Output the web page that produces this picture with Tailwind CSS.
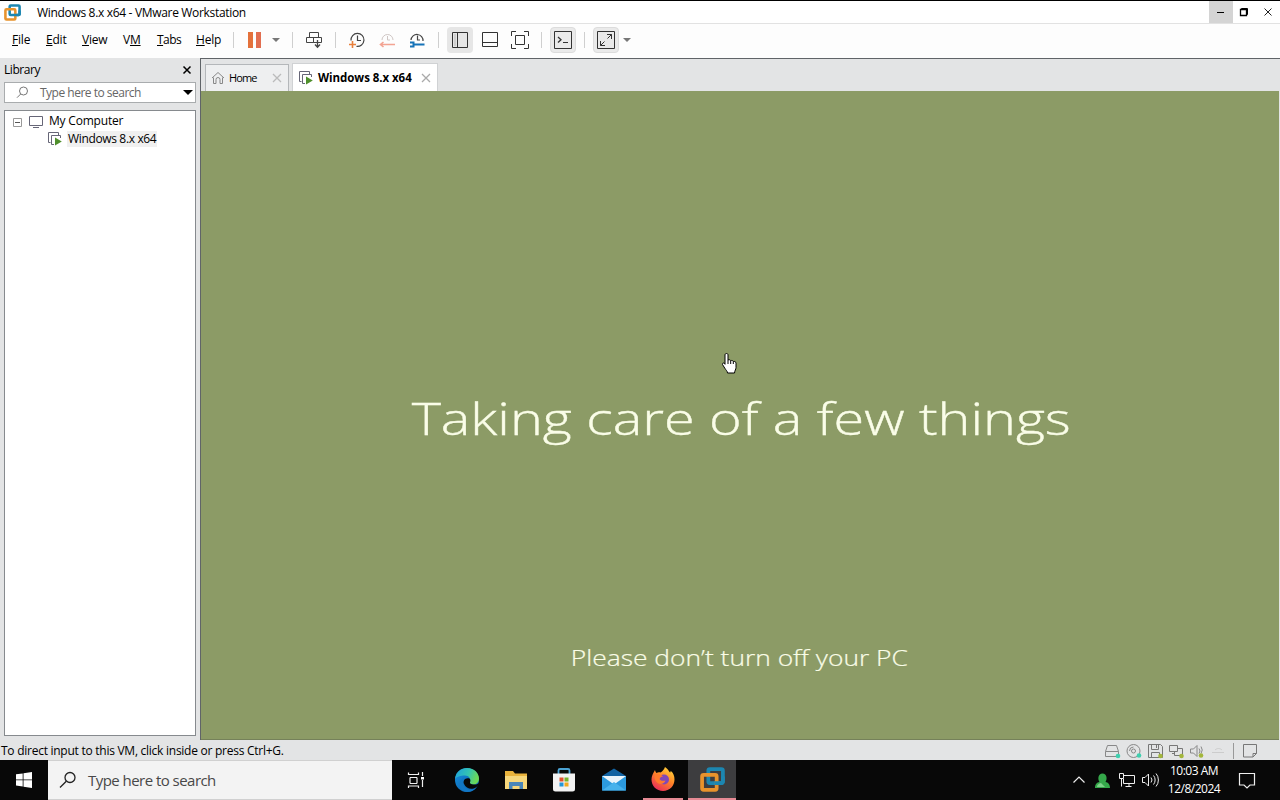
<!DOCTYPE html>
<html lang="en">
<head>
  <meta charset="UTF-8">
  <meta name="viewport" content="width=device-width, initial-scale=1.0">
  <title>Windows 8.x x64 - VMware Workstation</title>
  <script src="https://cdn.jsdelivr.net/npm/@tailwindcss/browser@4"></script>
</head>
<body class="font-['Open_Sans','Noto_Sans',sans-serif] text-black">
<!-- shared symbols -->
<svg class="hidden">
  <symbol id="vmware" viewBox="0 0 24 24">
    <g fill="none" stroke-width="3.6" stroke-linejoin="round">
      <rect x="8" y="2" width="14" height="13.500" rx="1.500" stroke="#1c86b0"/>
      <rect x="2" y="7.500" width="14" height="14.500" rx="1.500" stroke="#e8932c"/>
      <path d="M14 15.500h6.500a1.500 1.500 0 0 0 1.500-1.500V9" stroke="#1c86b0"/>
    </g>
  </symbol>
  <symbol id="vm-on" viewBox="0 0 14 14">
    <path d="M10.500 3.500v-3h-10v10h2" fill="none" stroke="#667"/>
    <path d="M6 12.500H3.500v-9h9V6" fill="none" stroke="#667"/>
    <path d="M7 5.500v8l6.800-4z" fill="#4f8f2c"/>
  </symbol>
</svg>

<div class="flex flex-col w-[1280px] h-[800px] overflow-hidden bg-[#e3e4e5]">

  <!-- title bar -->
  <div class="flex items-center h-6 shrink-0 border-t border-black border-b border-b-[#e2e2e2] bg-white">
    <svg class="w-[17px] h-[17px] ml-1"><use href="#vmware"/></svg>
    <span class="ml-4 pt-px text-[12px] leading-none tracking-[-0.32px]">Windows 8.x x64 - VMware Workstation</span>
    <div class="flex h-full ml-auto">
      <div class="flex items-center justify-center w-[24px] h-full bg-[#d4d4d4]">
        <svg width="10" height="10"><path d="M1 5.500h7" stroke="#000"/></svg>
      </div>
      <div class="flex items-center justify-center w-[23px] pr-px">
        <svg width="10" height="10" fill="none" stroke="#000"><path d="M2.500 2.500v-1h6v6h-1"/><path d="M1.500 2.500h6v6h-6z" stroke-width="1.300"/></svg>
      </div>
      <div class="flex items-center justify-center w-[24px] pr-px">
        <svg width="10" height="10"><path d="M1.500 1.500l7 7M8.500 1.500l-7 7" stroke="#222"/></svg>
      </div>
    </div>
  </div>

  <!-- menu and toolbar -->
  <div class="flex items-center h-[34px] shrink-0 pl-3 pb-[2px] bg-[#fdfdfd] text-[12px] leading-none">
    <div class="flex tracking-[-0.2px]">
      <span class="w-[34px]"><u>F</u>ile</span>
      <span class="w-[36px]"><u>E</u>dit</span>
      <span class="w-[41px]"><u>V</u>iew</span>
      <span class="w-[34px]">V<u>M</u></span>
      <span class="w-[39px] tracking-[-0.5px]"><u>T</u>abs</span>
      <span class="w-[37px]"><u>H</u>elp</span>
    </div>
    <div class="w-px h-4 bg-[#cfcfcf]"></div>
    <div class="flex gap-[3px] ml-[14px]">
      <div class="w-[5px] h-4 bg-[#e4713b]"></div>
      <div class="w-[5px] h-4 bg-[#e26e50]"></div>
    </div>
    <svg class="ml-[11px]" width="8" height="4"><path d="M0 0h8L4 4z" fill="#777"/></svg>
    <div class="w-px h-4 ml-[12px] bg-[#cfcfcf]"></div>
    <!-- send ctrl+alt+del -->
    <svg class="ml-[12px]" width="18" height="18" fill="none" stroke="#444">
      <path d="M4.500 1.500h9v5h-9zM1.500 6.500h7v5h-7zM8.500 6.500h8v5h-8z"/>
      <path d="M12.500 9v7M10 13.500l2.500 2.700 2.500-2.700" stroke-width="1.300"/>
    </svg>
    <div class="w-px h-4 ml-[12px] bg-[#cfcfcf]"></div>
    <!-- snapshots -->
    <svg class="ml-[12px]" width="18" height="18" fill="none">
      <path d="M3 9.500A6.500 6.500 0 1 1 8.500 15.300" stroke="#444" stroke-width="1.200"/>
      <path d="M9.500 4.500v5H13" stroke="#444" stroke-width="1.200"/>
      <path d="M4.500 10v7M1 13.500h7" stroke="#e8803c" stroke-width="1.600"/>
    </svg>
    <svg class="ml-[12px]" width="18" height="18" fill="none">
      <path d="M4 9a5.500 5.500 0 1 1 11 0" stroke="#cfc6c4"/>
      <path d="M9.500 5v4H12" stroke="#cfc6c4"/>
      <path d="M2.500 13.500H17M5.500 11l-3 2.500 3 2.500" stroke="#f3a493" stroke-width="1.600"/>
    </svg>
    <svg class="ml-[12px]" width="18" height="18" fill="none">
      <path d="M3 9a6 6 0 1 1 12 1" stroke="#444" stroke-width="1.200"/>
      <path d="M9.500 4.500v4.500H12" stroke="#444" stroke-width="1.200"/>
      <path d="M2 11.500h3.500v4H2M6 13.500h10.500" stroke="#1673b8" stroke-width="2"/>
    </svg>
    <div class="w-px h-4 ml-[12px] bg-[#cfcfcf]"></div>
    <!-- view buttons -->
    <div class="flex items-center justify-center w-[26px] h-[26px] ml-[8px] rounded bg-[#e6e6e6]">
      <svg width="18" height="18" fill="none" stroke="#333"><path d="M1.500 1.500h15v15h-15zM6.500 1.500v15"/><path d="M4 3v12" stroke="#bbb"/></svg>
    </div>
    <svg class="ml-[8px]" width="18" height="18" fill="none" stroke="#333"><path d="M1.500 1.500h15v14h-15zM1.500 11.500h15"/></svg>
    <svg class="ml-[11px]" width="20" height="20" fill="none" stroke="#333"><path d="M1.500 6v-4.500H6M14 1.500h4.500V6M18.500 14v4.500H14M6 18.500H1.500V14M5.500 5.500h9v9h-9z"/></svg>
    <div class="w-px h-4 ml-[11px] bg-[#cfcfcf]"></div>
    <div class="flex items-center justify-center w-[26px] h-[26px] ml-[8px] rounded border border-[#dcdcdc] bg-[#eaeaea]">
      <svg width="18" height="18" fill="none" stroke="#333"><path d="M.5.500h17v17H.5zM9 11.500h5"/><path d="M4 6l3 2.800L4 11.500" stroke-width="1.300"/></svg>
    </div>
    <div class="w-px h-4 ml-[8px] bg-[#cfcfcf]"></div>
    <div class="flex items-center justify-center w-[26px] h-[26px] ml-[8px] rounded border border-[#dcdcdc] bg-[#eaeaea]">
      <svg width="18" height="18" fill="none" stroke="#333"><path d="M.5.500h17v17H.5z"/><path d="M10 3.500h4.500V8M3.500 10v4.500H8M14.500 3.500l-4 4M3.500 14.500l4-4"/></svg>
    </div>
    <svg class="ml-[4px]" width="8" height="4"><path d="M0 0h8L4 4z" fill="#777"/></svg>
  </div>

  <!-- library and vm -->
  <div class="flex h-[682px] shrink-0">
    <div class="flex flex-col w-[200px] px-1 pb-1 text-[12px] leading-none">
      <div class="flex items-center justify-between h-6 pr-1">
        <span class="tracking-[-0.45px]">Library</span>
        <svg width="10" height="10"><path d="M1.500 1.500l7 7M8.500 1.500l-7 7" stroke="#000" stroke-width="1.500"/></svg>
      </div>
      <div class="flex items-center h-[21px] px-[2px] border border-[#a9acae] bg-white text-[#666]">
        <svg class="ml-[9px]" width="13" height="13" fill="none" stroke="#777"><circle cx="7.500" cy="5" r="4"/><path d="M4.700 8L1 11.700"/></svg>
        <span class="ml-[11px] pt-px tracking-[-0.5px]">Type here to search</span>
        <svg class="ml-auto" width="10" height="5"><path d="M0 0h10L5 5z" fill="#000"/></svg>
      </div>
      <div class="flex-1 mt-[7px] pt-[1px] border border-[#868a8e] bg-white">
        <div class="flex items-center h-[18px] pl-2">
          <svg width="9" height="9" fill="none" stroke="#999" class="mt-[3px]"><path d="M.5.500h8v8h-8z"/><path d="M2 4.500h5" stroke="#555"/></svg>
          <svg class="ml-[7px]" width="14" height="13" fill="none" stroke="#667"><path d="M.5 1.500h13v9H.5zM4 12.500h6"/></svg>
          <span class="ml-[6px] tracking-[-0.2px]">My Computer</span>
        </div>
        <div class="flex items-center h-[18px] pl-[43px]">
          <svg class="w-[14px] h-[14px]"><use href="#vm-on"/></svg>
          <span class="flex items-center h-4 ml-[5px] px-px bg-[#f0f0f0] tracking-[-0.35px]">Windows 8.x x64</span>
        </div>
      </div>
    </div>

    <div class="flex flex-col w-[1080px] border-t border-l border-[#606468]">
      <div class="flex items-end h-8 pl-1 text-[12px] leading-none">
        <div class="flex items-center w-[84px] h-[27px] pl-[5px] border border-b-0 border-[#b4b7ba] bg-[#eeeff0]">
          <svg width="14" height="14" fill="none" stroke="#888"><path d="M1 7l6-5.500L13 7M2.500 6.500v6H5v-4a2 2 0 0 1 4 0v4h2.500v-6"/></svg>
          <span class="ml-1 pb-px text-[11px] tracking-[-0.9px]">Home</span>
          <svg class="ml-auto mr-[6px]" width="10" height="10"><path d="M1 1l8 8M9 1L1 9" stroke="#bbb" stroke-width="1.300"/></svg>
        </div>
        <div class="flex items-center w-[146px] h-7 ml-[3px] pl-[6px] border border-b-0 border-[#d0d2d4] bg-white">
          <svg class="w-[14px] h-[14px]"><use href="#vm-on"/></svg>
          <span class="ml-[5px] text-[11.500px] font-bold tracking-[-0.05px] whitespace-nowrap">Windows 8.x x64</span>
          <svg class="ml-auto mr-[6px]" width="10" height="10"><path d="M1 1l8 8M9 1L1 9" stroke="#aaa" stroke-width="1.300"/></svg>
        </div>
      </div>

      <!-- guest screen -->
      <div class="relative flex-1 flex flex-col items-center mr-px border-b border-[#75815a] bg-[#8c9b66] text-[#fafde8] font-light leading-none whitespace-nowrap">
        <div class="mt-[304px] ml-[3px] h-[52px] text-[45px] origin-center scale-x-[1.238] [-webkit-text-stroke:0.4px_#fafde8]">Taking care of a few things</div>
        <div class="mt-[200px] mr-px h-[26px] text-[21.500px] origin-center scale-x-[1.227] [-webkit-text-stroke:0.2px_#fafde8]">Please don’t turn off your PC</div>
        <svg class="absolute left-[519px] top-[261px]" width="18" height="24" viewBox="0 0 18 24">
          <path d="M5.500 1.500c1 0 1.500.6 1.500 1.500v5c1-.6 2.300-.3 2.700.7 1-.5 2.200-.2 2.600.8 1.200-.4 2.700.2 2.700 1.700v4.300c0 2-1.300 3-1.500 5.500H6.500c0-1.800-1.700-3-2.700-4.800L1.500 12.500c-.4-1.200 1-2 1.900-1.100L4 12.300V3c0-.9.500-1.500 1.500-1.500z" fill="#fff" stroke="#000" transform="translate(1 0)"/>
          <path d="M8 8v4M10.700 9v3M13.300 9.700V12" stroke="#000" fill="none"/>
        </svg>
      </div>
    </div>
  </div>

  <!-- status bar -->
  <div class="flex items-center h-5 shrink-0 pl-px text-[12px] leading-none">
    <span class="pt-px tracking-[-0.26px]">To direct input to this VM, click inside or press Ctrl+G.</span>
    <div class="flex items-center ml-auto pt-[2px] pb-px mr-[22px]">
      <svg width="17" height="16" fill="none" stroke="#888"><path d="M1.500 8.500l2-6h9l2 6v5h-13zM1.500 8.500h13"/><circle cx="14" cy="13" r="2.300" fill="#3fcfae" stroke="none"/></svg>
      <svg class="ml-[5px]" width="17" height="16" fill="none" stroke="#888"><circle cx="7.500" cy="8" r="6.500"/><circle cx="7.500" cy="8" r="2"/><path d="M7.500 4a4 4 0 0 0-4 4"/><circle cx="13" cy="12.500" r="2.300" fill="#3fcfae" stroke="none"/></svg>
      <svg class="ml-[4px]" width="17" height="16" fill="none" stroke="#777"><path d="M1.500 1.500h12l2 2v11h-14zM4.500 1.500v5h7v-5M9.500 2v3M4.500 14.500v-5h8v5"/><circle cx="13.500" cy="13" r="2.300" fill="#a3b63c" stroke="none"/></svg>
      <svg class="ml-[4px]" width="17" height="16" fill="none" stroke="#777"><path d="M1.500 2.500h8v6h-8zM6.500 8.500v4h8v-7h-5M4 10.500h3"/><circle cx="13.500" cy="13" r="2.300" fill="#a3b63c" stroke="none"/></svg>
      <svg class="ml-[4px]" width="17" height="16" fill="none" stroke="#888"><path d="M1.500 6h3l3.500-3.500v11L4.500 10h-3zM10 5.500a4 4 0 0 1 0 5M12 3.500a6 6 0 0 1 0 7"/><circle cx="12" cy="12.500" r="2.300" fill="#a3b63c" stroke="none"/></svg>
      <svg class="ml-[4px]" width="17" height="16" fill="none" stroke="#ccc"><path d="M2 9.500h12M5 7c2-2 5-2 7 0"/></svg>
      <div class="w-px h-4 ml-[6px] bg-[#999]"></div>
      <svg class="ml-[8px]" width="16" height="16" fill="none" stroke="#777"><path d="M1.500 1.500h13v9l-3.500 3.500H1.500zM14.500 10.500H11V14"/></svg>
    </div>
  </div>

  <!-- taskbar -->
  <div class="flex h-10 shrink-0 bg-[#080808] text-white">
    <div class="flex items-center justify-center w-12">
      <svg width="16" height="16" fill="#fff"><path d="M0 2.300l6.700-.9v6.100H0zM7.500 1.300L16 0v7.500H7.500zM0 8.300h6.700v6.200L0 13.600zM7.500 8.300H16V16l-8.500-1.300z"/></svg>
    </div>
    <div class="flex items-center w-[344px] border-y border-[#d0d0d0] bg-[#f3f3f3]">
      <svg class="ml-[11px]" width="18" height="18" fill="none" stroke="#222" stroke-width="1.300"><circle cx="11" cy="6.500" r="5"/><path d="M7.300 10.200L1 16.500"/></svg>
      <span class="ml-[11px] pt-px text-[15px] leading-none text-[#484848] tracking-[-0.54px]">Type here to search</span>
    </div>
    <div class="flex items-center justify-center w-12">
      <svg width="18" height="18" fill="none" stroke="#eee" stroke-width="1.200"><path d="M1.500 1.500v2h10v-2M3 6.500v6M10 6.500v6M3 6.500h7M3 12.500h7M1.500 17v-2h10v2M15.500 1v4M15.500 9v7"/><path d="M14 6h3v2.500h-3z" fill="#fff" stroke="none"/></svg>
    </div>
    <!-- edge -->
    <div class="flex items-center justify-center w-[54px]">
      <svg width="26" height="26" viewBox="0 0 26 26">
        <defs>
          <linearGradient id="edge-top" x1="0" y1="0" x2="1" y2=".3"><stop offset="0" stop-color="#1c9fe0"/><stop offset=".6" stop-color="#34c4b2"/><stop offset="1" stop-color="#6bd858"/></linearGradient>
          <linearGradient id="edge-base" x1="0" y1="0" x2="1" y2="1"><stop offset="0" stop-color="#1490df"/><stop offset="1" stop-color="#0c59a4"/></linearGradient>
        </defs>
        <circle cx="13" cy="13" r="12" fill="url(#edge-base)"/>
        <path d="M1 12C2 4.500 7 1 13 1c7.500 0 12 5.300 12 10.500 0 4-3 6-6 6-2.500 0-4-1-3.500-2.200C17.500 12 15 8.500 11 8.500 6.500 8.500 2.500 10 1 12z" fill="url(#edge-top)"/>
        <path d="M15.500 11.500c-4-1.500-7 2-5.500 5.500 1.500 3.800 6 5.500 9.500 4.500 2-.6 3.500-1.500 5-3.500l1.500-3c-1.500 2-4 2.800-6.500 2.500-2.500-.3-4-1-3.500-2.200.7-1.300.5-2.700-.5-3.800z" fill="#080808"/>
        <path d="M10.500 10.500c-3 3-2 9.500 3.500 11.500 3.500 1.200 7 .2 9-2-2.500 3.500-6 5-10 5C8 25 5 21 5.500 16.500c.3-3 2.500-5.300 5-6z" fill="#1276c4"/>
      </svg>
    </div>
    <!-- explorer -->
    <div class="flex items-center justify-center w-[43px]">
      <svg width="24" height="22" viewBox="0 0 24 22">
        <path d="M1 2h8l2 2.500h12V20H1z" fill="#e9b33c"/>
        <path d="M1 7h22v13H1z" fill="#f6d77c"/>
        <path d="M5 20v-7h14v7h-3.500v-3h-7v3z" fill="#4a86b8"/>
      </svg>
    </div>
    <!-- store -->
    <div class="flex items-center justify-center w-[54px]">
      <svg width="24" height="26" viewBox="0 0 24 26">
        <path d="M6.500 7V3.500A1.500 1.500 0 0 1 8 2h8a1.500 1.500 0 0 1 1.500 1.500V7" fill="none" stroke="#4ba3d4" stroke-width="1.800"/>
        <path d="M1 6.500h22V22a2.500 2.500 0 0 1-2.500 2.500h-17A2.500 2.500 0 0 1 1 22z" fill="#f2f2f2"/>
        <path d="M7.500 10.500h4v4h-4z" fill="#e2502c"/><path d="M12.500 10.500h4v4h-4z" fill="#76b32c"/>
        <path d="M7.500 15.500h4v4h-4z" fill="#2496d8"/><path d="M12.500 15.500h4v4h-4z" fill="#f2a91f"/>
      </svg>
    </div>
    <!-- mail -->
    <div class="flex items-center justify-center w-[46px]">
      <svg width="26" height="24" viewBox="0 0 26 24">
        <path d="M1 8L13 .5 25 8v4H1z" fill="#1263a3"/>
        <path d="M1 8h24v14.500H1z" fill="#2c9ade"/>
        <path d="M1 8h24l-12 8.500z" fill="#eaf4fb"/>
        <path d="M1 22.500L13 14l12 8.500z" fill="#47b2ec"/>
      </svg>
    </div>
    <!-- firefox -->
    <div class="flex items-center justify-center w-[40px] ml-[6px] mr-[5px] border-b-2 border-[#e58a94]">
      <svg width="26" height="26" viewBox="0 0 26 26">
        <defs><linearGradient id="fox" x1=".8" y1="0" x2=".2" y2="1"><stop offset="0" stop-color="#ffd93b"/><stop offset=".45" stop-color="#ff8427"/><stop offset="1" stop-color="#e8265e"/></linearGradient></defs>
        <path d="M15 1c3 1.800 3.500 4 5 5.500.6-.4.7-1 .6-1.800C23.500 7 24.500 10 24.500 13.500 24.500 20 19.500 25 13 25S1.500 20 1.500 13.500C1.500 10 3 7.500 5 4c.3 1.500.8 2.200 1.600 3C7.500 6 9.500 6 10.500 6.500 12 5.500 14 4 15 1z" fill="url(#fox)"/>
        <circle cx="14" cy="13.500" r="5" fill="#8048b8"/>
        <path d="M5 9c3-1.500 6-.5 8 1.500-2 .2-3 1.300-3.500 2.500 1 2 4 2 6 1.500-1 3.500-6 4.500-8.500 2S4 11 5 9z" fill="#ff7a2c"/>
      </svg>
    </div>
    <!-- workstation -->
    <div class="flex items-center justify-center w-12 pt-px border-b-2 border-[#e58a94] bg-[#3d3d3f]">
      <svg class="w-[25px] h-[25px]"><use href="#vmware"/></svg>
    </div>

    <!-- tray -->
    <div class="flex items-center ml-auto pr-[24px]">
      <svg width="14" height="10" fill="none" stroke="#eee" stroke-width="1.200"><path d="M1.500 7.500L7 2l5.500 5.500"/></svg>
      <svg class="ml-[8px]" width="17" height="17"><path d="M1 16c0-4 2-5.500 4.500-6C3.500 7 4 1.500 8.500 1.500S13.500 7 11.500 10c2.500.5 4.500 2 4.500 6z" fill="#35a84a"/><path d="M3 15c0-2 1.500-3.500 4-4l4 4z" fill="#7fd08a"/></svg>
      <svg class="ml-[7px]" width="18" height="16" fill="none" stroke="#eee"><path d="M5 3.500h11.500v8h-11V7M1.500 1.500h4v5h-4zM3.500 6.500v8M11 11.500v3M7.500 14.500h6"/></svg>
      <svg class="ml-[5px]" width="18" height="16" fill="none" stroke="#eee"><path d="M1.500 5.500h2.500l3.500-3.500v12L4 10.500H1.500zM10 5.500a4 4 0 0 1 0 5M12.500 3.500a7 7 0 0 1 0 9M15 1.500a10 10 0 0 1 0 13"/></svg>
      <div class="flex flex-col items-center w-[54px] ml-[8px] text-[12px] leading-[18px] tracking-[-0.5px] whitespace-nowrap">
        <span>10:03 AM</span>
        <span>12/8/2024</span>
      </div>
      <svg class="ml-[17px]" width="18" height="18" fill="none" stroke="#eee" stroke-width="1.200"><path d="M1.500 2.500h15v11.500h-4.500l-3 3-3-3H1.500z"/></svg>
    </div>
  </div>
</div>
</body>
</html>
